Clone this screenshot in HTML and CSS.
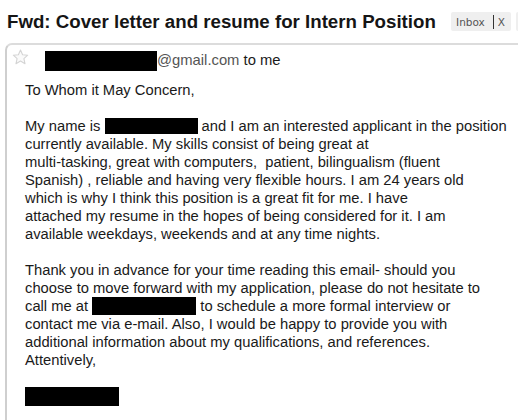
FILE: index.html
```html
<!DOCTYPE html>
<html>
<head>
<meta charset="utf-8">
<link rel="stylesheet" href="styles.css">
</head>
<body>
<div class="header">
  <h1 class="subject">Fwd: Cover letter and resume for Intern Position</h1>
  <div class="labels">
    <span class="label">Inbox<span class="sep"></span>X</span>
    <span class="label-next"></span>
  </div>
</div>
<div class="message">
  <div class="sender-row">
    <svg class="star" width="17" height="16" viewBox="0 0 17 16"><path d="M8.5 1 L10.6 5.7 L15.7 6.2 L11.9 9.6 L13 14.7 L8.5 12.1 L4 14.7 L5.1 9.6 L1.3 6.2 L6.4 5.7 Z" fill="#fafafa" stroke="#d4d4d4" stroke-width="1.1" stroke-linejoin="round"/></svg>
    <span class="redact sender-redact"></span><span class="domain">@gmail.com</span>&nbsp;<span class="to">to me</span>
  </div>
  <div class="body">
    <p class="greet">To Whom it May Concern,</p>
    <p class="para">My name is <span class="redact name-redact"></span> and I am an interested applicant in the position<br>currently available. My skills consist of being great at<br>multi-tasking, great with computers,&nbsp; patient, bilingualism (fluent<br>Spanish) , reliable and having very flexible hours. I am 24 years old<br>which is why I think this position is a great fit for me. I have<br>attached my resume in the hopes of being considered for it. I am<br>available weekdays, weekends and at any time nights.</p>
    <p class="para para2">Thank you in advance for your time reading this email- should you<br>choose to move forward with my application, please do not hesitate to<br>call me at <span class="redact phone-redact"></span> to schedule a more formal interview or<br>contact me via e-mail. Also, I would be happy to provide you with<br>additional information about my qualifications, and references.<br>Attentively,</p>
    <div class="redact sig-redact"></div>
  </div>
</div>
</body>
</html>
```

FILE: styles.css
```css
html, body {
  margin: 0;
  padding: 0;
  background: #ffffff;
}
body {
  font-family: "Liberation Sans", Arial, sans-serif;
  color: #1a1a1a;
  width: 518px;
  height: 420px;
  overflow: hidden;
}
.header {
  display: flex;
  align-items: center;
  height: 43px;
  padding-left: 7px;
  white-space: nowrap;
}
.subject {
  margin: 0;
  font-size: 18.7px;
  font-weight: bold;
  color: #151515;
  letter-spacing: 0;
}
.labels {
  margin-left: auto;
  display: flex;
  align-items: center;
  gap: 5px;
  margin-right: -10px;
}
.label {
  display: inline-flex;
  align-items: center;
  height: 19px;
  padding: 0 6px 0 5px;
  background: #efefef;
  border-radius: 2px;
  font-size: 10.5px;
  color: #555;
  font-family: "DejaVu Sans", sans-serif;
}
.sep {
  display: inline-block;
  width: 1px;
  height: 14px;
  background: #333;
  margin: 0 4px 0 8px;
}
.label-next {
  display: inline-block;
  width: 12px;
  height: 19px;
  background: #efefef;
  border-radius: 2px;
}
.message {
  margin-left: 5px;
  border-top: 2px solid #dcdcdc;
  border-left: 2px solid #cfcfcf;
  border-top-left-radius: 7px;
  height: 375px;
}
.sender-row {
  display: flex;
  align-items: center;
  height: 30px;
  padding-left: 5px;
  font-size: 14.8px;
  white-space: nowrap;
}
.star {
  margin-top: -6px;
  margin-right: 16px;
}
.redact {
  display: inline-block;
  background: #000;
}
.sender-redact {
  width: 112px;
  height: 20px;
  margin-top: 2px;
}
.domain {
  color: #555;
}
.to {
  color: #1a1a1a;
}
.body {
  padding: 6px 0 0 18px;
  font-size: 14.75px;
  line-height: 18px;
  white-space: nowrap;
}
.body p {
  margin: 0 0 18px 0;
}
.para2 {
  margin-top: 20px;
}
.name-redact {
  width: 93px;
  height: 16px;
  vertical-align: -3px;
}
.phone-redact {
  width: 104px;
  height: 18px;
  vertical-align: -4px;
}
.sig-redact {
  width: 94px;
  height: 19px;
  margin-top: 0;
}
```
